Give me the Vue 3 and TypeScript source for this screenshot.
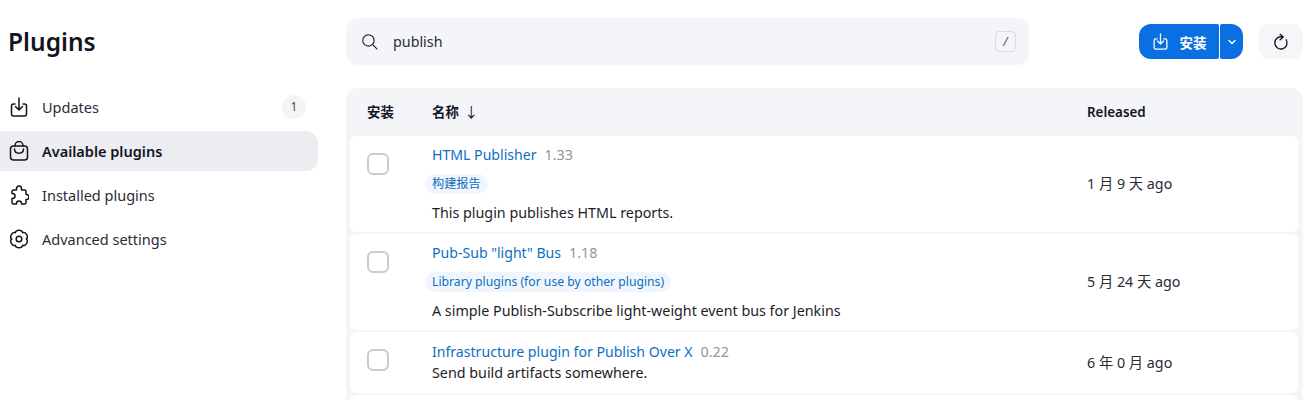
<script setup lang="ts">
interface Row { name: string; ver: string; tag?: string; desc: string; when: string; cls: string }
const rows: Row[] = [
  { name: 'HTML Publisher', ver: '1.33', tag: '构建报告', desc: 'This plugin publishes HTML reports.', when: '1 月 9 天 ago', cls: 'tall' },
  { name: 'Pub-Sub "light" Bus', ver: '1.18', tag: 'Library plugins (for use by other plugins)', desc: 'A simple Publish-Subscribe light-weight event bus for Jenkins', when: '5 月 24 天 ago', cls: 'tall' },
  { name: 'Infrastructure plugin for Publish Over X', ver: '0.22', desc: 'Send build artifacts somewhere.', when: '6 年 0 月 ago', cls: 'short' }
]
const polar = (r: number, deg: number): string => {
  const a = (deg * Math.PI) / 180
  return `${(10 + r * Math.cos(a)).toFixed(2)} ${(10 + r * Math.sin(a)).toFixed(2)}`
}
const gearPath = (): string => {
  let d = `M${polar(7.2, -120)}`
  for (let i = 0; i < 6; i++) {
    const a = -90 + 60 * i
    d += ` C${polar(10.4, a - 22)} ${polar(10.4, a + 22)} ${polar(7.2, a + 30)}`
  }
  return d + 'Z'
}
const gear = gearPath()
</script>

<template>
  <div class="page">
    <aside class="side">
      <h1 class="title">Plugins</h1>
      <nav class="nav">
        <a class="item">
          <svg class="ico" viewBox="0 0 20 20"><path d="M6 7H4.500A2 2 0 0 0 2.500 9v8a2 2 0 0 0 2 2h11a2 2 0 0 0 2-2V9a2 2 0 0 0-2-2H14M10 1v12M6.500 9.500l3.500 3.500 3.500-3.500" /></svg>
          <span>Updates</span>
          <span class="count">1</span>
        </a>
        <a class="item active">
          <svg class="ico" viewBox="0 0 20 20"><rect x="1.500" y="5" width="17" height="14" rx="3" /><path d="M6 5V4.500a4 4 0 0 1 8 0V5M5.500 8c0 5.500 9 5.500 9 0" /></svg>
          <span>Available plugins</span>
        </a>
        <a class="item">
          <svg class="ico" viewBox="0 0 20 20"><path d="M7.500 3.500a2.500 2.500 0 0 1 5 0V5h3A1.500 1.500 0 0 1 17 6.500v3h.5a2.500 2.500 0 0 1 0 5H17v3a1.500 1.500 0 0 1-1.500 1.500h-3v-.5a2.500 2.500 0 0 0-5 0v.5h-3A1.500 1.500 0 0 1 3 17.500v-4h.5a2.500 2.500 0 0 0 0-5H3V6.500A1.500 1.500 0 0 1 4.500 5h3z" /></svg>
          <span>Installed plugins</span>
        </a>
        <a class="item">
          <svg class="ico" viewBox="0 0 20 20"><path :d="gear" /><circle cx="10" cy="10" r="2.800" /></svg>
          <span>Advanced settings</span>
        </a>
      </nav>
    </aside>
    <main class="main">
      <div class="toolbar">
        <div class="search">
          <svg class="sico" viewBox="0 0 24 24"><circle cx="10.500" cy="10.500" r="8" /><path d="M16.500 16.500l6 6" /></svg>
          <span class="q">publish</span>
          <kbd class="key">/</kbd>
        </div>
        <div class="actions">
          <div class="split">
            <button class="btn primary">
              <svg class="bico" viewBox="0 0 20 20"><path d="M6 7H4.500A2 2 0 0 0 2.500 9v8a2 2 0 0 0 2 2h11a2 2 0 0 0 2-2V9a2 2 0 0 0-2-2H14M10 1v12M6.500 9.500l3.500 3.500 3.500-3.500" /></svg>
              <span>安装</span>
            </button>
            <button class="btn caret">
              <svg class="cico" viewBox="0 0 12 12"><path d="M3 4.500l3 3 3-3" /></svg>
            </button>
          </div>
          <button class="refresh">
            <svg class="rico" viewBox="0 0 20 20"><path d="M12 4.500A6.800 6.800 0 1 0 15.800 7.500M9 1.500l3.500 3-3.500 3" /></svg>
          </button>
        </div>
      </div>
      <div class="panel">
        <div class="head">
          <div class="c-check lift">安装</div>
          <div class="c-name lift">名称 <span class="arrow">↓</span></div>
          <div class="c-when">Released</div>
        </div>
        <div class="rows">
          <div v-for="r in rows" :key="r.name" class="row" :class="r.cls">
            <div class="c-check"><span class="box"></span></div>
            <div class="c-name info">
              <div class="line"><a class="link">{{ r.name }}</a><span class="ver">{{ r.ver }}</span></div>
              <div v-if="r.tag" class="tagline"><span class="tag">{{ r.tag }}</span></div>
              <div class="desc">{{ r.desc }}</div>
            </div>
            <div class="c-when when">{{ r.when }}</div>
          </div>
          <div class="row"></div>
        </div>
      </div>
    </main>
  </div>
</template>

<style>
html, body { margin: 0; height: 400px; overflow: hidden; background: #fff; }
</style>

<style scoped>
.page { display: flex; height: 400px; overflow: hidden; font-family: "Noto Sans", "Noto Sans CJK SC", sans-serif; font-size: 14.3px; color: #14141f; }
.side { width: 318px; flex: none; }
.title { margin: 0; padding: 24px 0 0 8px; font-size: 24.5px; line-height: 36px; font-weight: 600; color: #14141f; }
.nav { display: flex; flex-direction: column; margin-top: 27px; gap: 4px; }
.item { display: flex; align-items: center; height: 40px; padding: 0 12px 0 9px; gap: 13px; border-radius: 0 12px 12px 0; font-size: 14.5px; line-height: 20px; color: #2b2b36; }
.item > span:not(.count) { margin-top: -1px; }
.item.active { background: #ecedf1; font-weight: 600; color: #14141f; }
.ico { width: 20px; height: 20px; fill: none; stroke: #14141f; stroke-width: 1.5; stroke-linecap: round; stroke-linejoin: round; }
.count { margin-left: auto; width: 24px; height: 24px; border-radius: 50%; background: #f3f4f6; color: #4a4a4a; display: flex; align-items: center; justify-content: center; font-size: 12px; }
.main { margin-left: 28px; width: 957px; flex: none; }
.toolbar { display: flex; align-items: flex-start; padding-top: 18px; height: 88px; box-sizing: border-box; }
.search { width: 683px; height: 47px; background: #f4f5f8; border-radius: 12px; display: flex; align-items: center; padding: 0 13px 0 15px; box-sizing: border-box; }
.sico { width: 17px; height: 17px; fill: none; stroke: #14141f; stroke-width: 1.5; stroke-linecap: round; }
.q { margin-left: 15px; font-size: 14.3px; color: #2b2b36; }
.key { margin-left: auto; width: 21px; height: 21px; box-sizing: border-box; border: 1px solid #dcdde2; border-radius: 4px; display: flex; align-items: center; justify-content: center; font: italic 12px "Noto Sans", sans-serif; color: #555; background: #f4f5f8; }
.actions { margin-left: auto; display: flex; gap: 16px; margin-top: 6px; }
.split { display: flex; gap: 1px; }
.btn { border: 0; height: 35px; background: #0a6fe0; color: #fff; display: flex; align-items: center; justify-content: center; padding: 0; font-family: inherit; }
.primary { width: 80px; border-radius: 12px 2px 2px 12px; gap: 11px; font-size: 13.5px; font-weight: 700; }
.caret { width: 23px; border-radius: 2px 12px 12px 2px; }
.bico { width: 17px; height: 17px; fill: none; stroke: #fff; stroke-width: 1.5; stroke-linecap: round; stroke-linejoin: round; }
.cico { width: 12px; height: 12px; fill: none; stroke: #fff; stroke-width: 1.4; stroke-linecap: round; stroke-linejoin: round; }
.refresh { width: 44px; height: 35px; border: 0; padding: 0; border-radius: 10px; background: #f6f6f8; display: flex; align-items: center; justify-content: center; }
.rico { width: 18px; height: 18px; fill: none; stroke: #14141f; stroke-width: 1.5; stroke-linecap: round; stroke-linejoin: round; }
.panel { background: #f4f5f8; border-radius: 12px; padding: 0 5px 0 4px; }
.head { display: flex; align-items: center; height: 48px; font-size: 13.4px; font-weight: 600; }
.lift { margin-top: -2px; }
.arrow { font-weight: 400; margin-left: 2px; font-size: 14px; }
.c-check { width: 82px; flex: none; padding-left: 17px; box-sizing: border-box; }
.c-name { flex: 1; min-width: 0; }
.c-when { width: 212px; flex: none; padding-left: 1px; box-sizing: border-box; }
.rows { display: flex; flex-direction: column; gap: 2px; }
.row { display: flex; align-items: center; background: #fff; border-radius: 6px; min-height: 40px; position: relative; }
.row.tall { height: 96px; }
.row.short { height: 61px; }
.row.short .desc { margin-top: 1px; }
.row .c-check { align-self: flex-start; padding-top: 17px; padding-left: 17px; }
.box { display: block; width: 22px; height: 22px; box-sizing: border-box; border: 2px solid #c9cbd0; border-radius: 6px; background: #fff; }
.info { margin-top: -1px; }
.line { display: flex; align-items: baseline; gap: 8px; line-height: 20px; }
.link { color: #0b6fc4; font-size: 14.1px; }
.ver { color: #94949c; }
.tagline { margin: 9px 0 9px -7px; display: flex; }
.tag { background: #f1f6fd; color: #0b6fc4; border-radius: 10px; padding: 0 7px; line-height: 20px; font-size: 12.2px; }
.desc { line-height: 20px; color: #1d1d27; }
.when { color: #2b2b36; font-size: 14.3px; padding-bottom: 3px; }
</style>
